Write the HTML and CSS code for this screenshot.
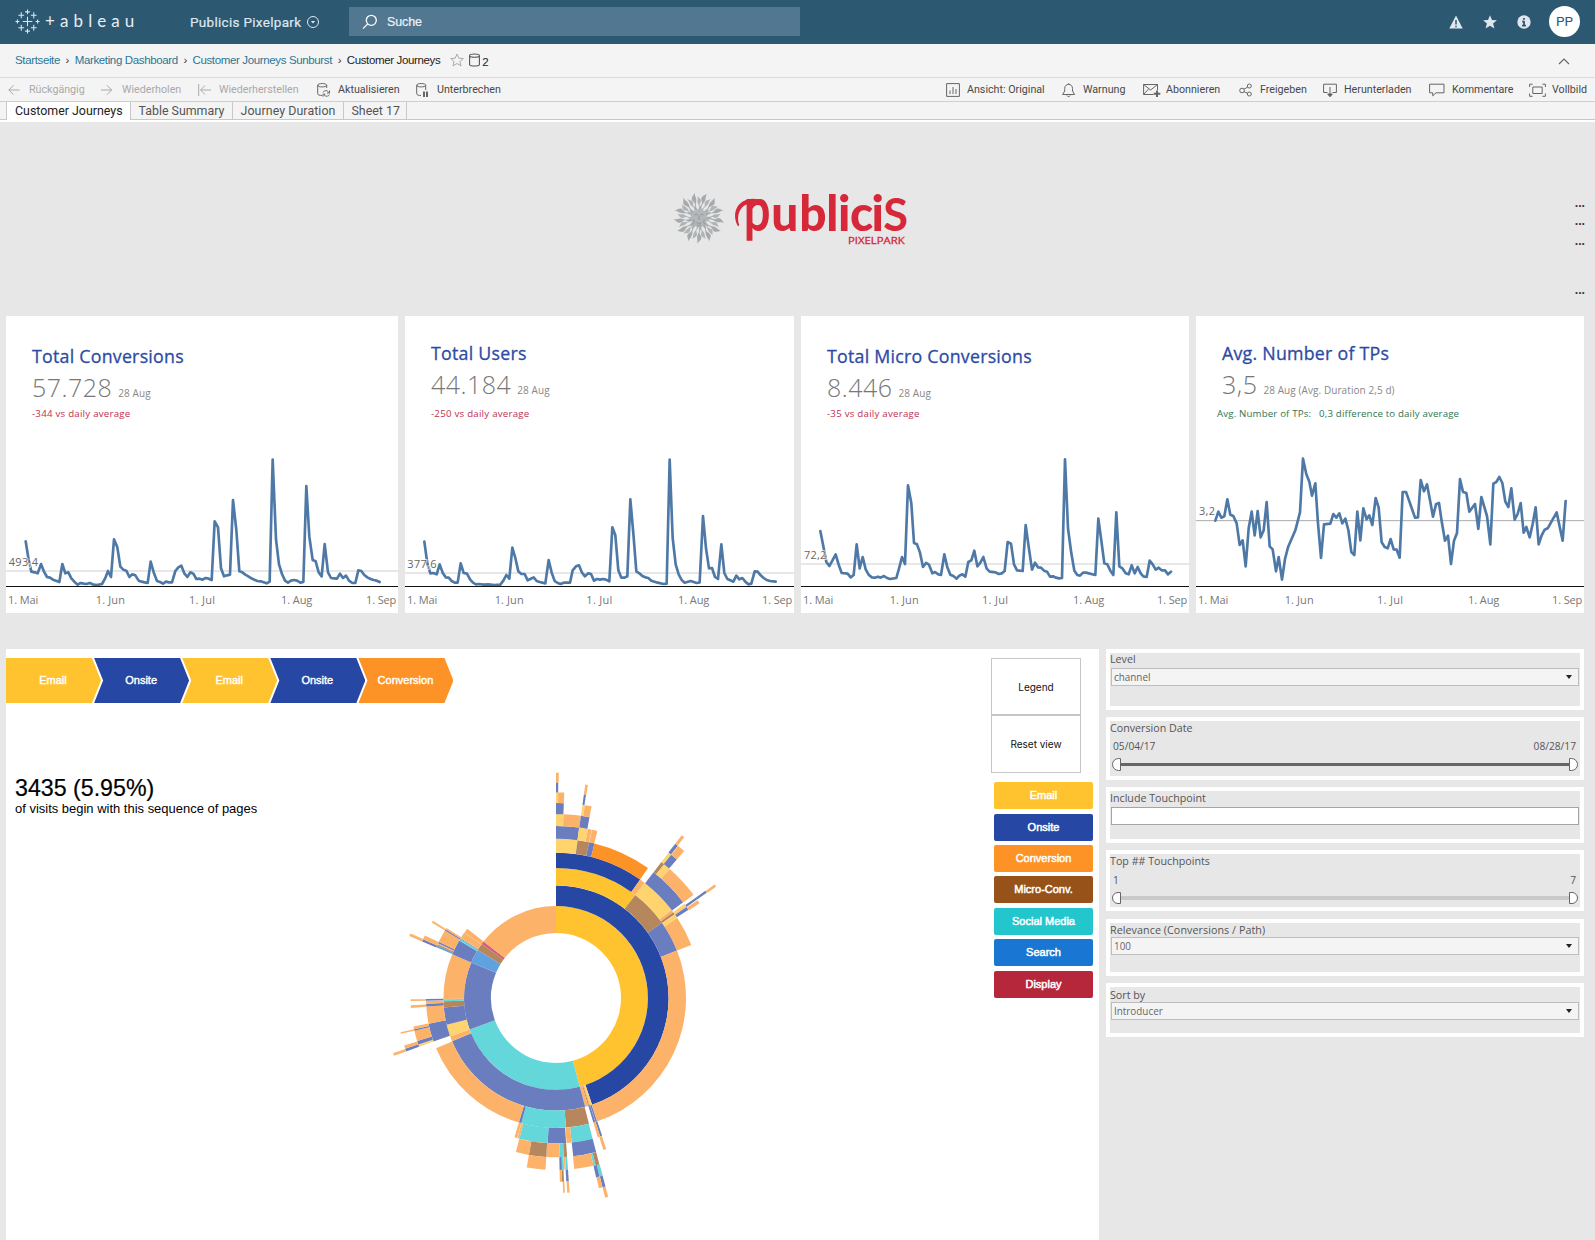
FILE: index.html
```html
<!DOCTYPE html>
<html lang="de">
<head>
<meta charset="utf-8">
<title>Customer Journeys</title>
<link rel="stylesheet" href="styles.css">
</head>
<body>
<header class="topbar">
  <svg class="mark" viewBox="0 0 26 26"><path d="M13 8v10M8 13h10M13 .5v5M10.500 3h5M13 20.500v5M10.500 23h5M.5 13h4M2.500 11v4M21.500 13h4M23.500 11v4M6.500 3.500v6M3.500 6.500h6M19.500 3.500v6M16.500 6.500h6M6.500 16.500v6M3.500 19.500h6M19.500 16.500v6M16.500 19.500h6"/></svg>
  <span class="wordmark">+ableau</span>
  <span class="site">Publicis Pixelpark</span>
  <svg class="drop" viewBox="0 0 14 14"><circle cx="7" cy="7" r="5.500"/><path d="M4.800 6h4.400L7 8.500z"/></svg>
  <div class="search"><svg viewBox="0 0 16 16"><circle cx="9.300" cy="6.300" r="5"/><path d="M5.700 9.900L1 14.600"/></svg><span>Suche</span></div>
  <div class="account">
    <svg viewBox="0 0 14 14"><path fill="#dfe6ee" d="M7 .5L13.700 13.500H.3z"/><path stroke="#2c5872" stroke-width="1.500" d="M7 5v4.500M7 10.700v1.500"/></svg>
    <svg viewBox="0 0 14 14"><path fill="#dfe6ee" d="M7 .3l2 4.700 4.900.3-3.800 3.200 1.300 5L7 10.800l-4.400 2.700 1.300-5L.1 5.300 5 5z"/></svg>
    <svg viewBox="0 0 14 14"><circle cx="7" cy="7" r="6.700" fill="#dfe6ee"/><path stroke="#2c5872" stroke-width="1.800" d="M7 3v1.800M7 6v4.500M5.300 6.500H7M5 10.600h4"/></svg>
    <span class="avatar">PP</span>
  </div>
</header>

<nav class="crumbs">
  <a>Startseite</a><i>›</i><a>Marketing Dashboard</a><i>›</i><a>Customer Journeys Sunburst</a><i>›</i><span>Customer Journeys</span>
  <svg class="fav" viewBox="0 0 14 14"><path d="M7 1l1.800 4.200 4.600.3-3.500 3 1.100 4.400L7 10.500l-4 2.400 1.100-4.400-3.500-3 4.600-.3z"/></svg>
  <svg class="db" viewBox="0 0 11 14"><path d="M.6 2.500C.6.500 10.400.5 10.400 2.500v9c0 2-9.800 2-9.800 0zM.6 2.500c0 2.300 9.800 2.300 9.800 0"/></svg>
  <span class="count">2</span>
  <svg class="collapse" viewBox="0 0 12 8"><path d="M1 7l5-5 5 5"/></svg>
</nav>

<div class="toolbar">
  <div class="tool off"><svg viewBox="0 0 18 14"><path d="M11.500 7H.8M5.500 2.300L.8 7l4.700 4.700"/></svg>Rückgängig</div>
  <div class="tool off"><svg viewBox="0 0 18 14"><path d="M0 7h10.700M6 2.300L10.700 7 6 11.700"/></svg>Wiederholen</div>
  <div class="tool off"><svg viewBox="0 0 18 14"><path d="M.7 1v12M13 7H3M7 2.500L2.500 7 7 11.500"/></svg>Wiederherstellen</div>
  <div class="tool"><svg viewBox="0 0 18 14"><path d="M5 12.500c-2 0-4.300-.5-4.300-1.700V2.200C.7 0 9.700 0 9.700 2.200V5M.7 2.200c0 2.300 9 2.300 9 0M6 9.500c1-2.500 5-2.500 5.500 0M12.500 7.500v2.500H10M12.500 11.500c-1 2.300-5 2.300-5.500 0M6 13.700v-2.500h2.300"/></svg>Aktualisieren</div>
  <div class="tool"><svg viewBox="0 0 18 14"><path d="M5 12.500c-2 0-4.300-.5-4.300-1.700V2.200C.7 0 9.700 0 9.700 2.200V7M.7 2.200c0 2.300 9 2.300 9 0"/><path stroke-width="2" d="M8 8.500V14M11 8.500V14"/></svg>Unterbrechen</div>
  <div class="tool"><svg viewBox="0 0 18 14"><path d="M.6.6h12.800v12.800H.6zM4 11V7.500M7 11V4M10 11V6"/></svg>Ansicht: Original</div>
  <div class="tool"><svg viewBox="0 0 18 14"><path d="M.6 11.500h12L10.500 8V5.500C10.500 0 2.700 0 2.700 5.500V8zM5 12.500c.5 1.500 2.700 1.500 3.200 0M6.600.2v1"/></svg>Warnung</div>
  <div class="tool wide"><svg viewBox="0 0 18 14"><path d="M10.500 11.500H.6V1.500h13.900V7M.6 1.500l7 5.500 6.900-5.500M.6 11.500L5.500 6"/><path stroke-width="2" d="M14 7.500v6.500M10.700 10.800h6.600"/></svg>Abonnieren</div>
  <div class="tool"><svg viewBox="0 0 18 14"><circle cx="3" cy="7.500" r="2.300"/><circle cx="10.300" cy="3" r="2"/><circle cx="10.300" cy="11" r="2"/><path d="M5 6.200l3.500-2M5 8.700l3.500 1.500"/></svg>Freigeben</div>
  <div class="tool"><svg viewBox="0 0 18 14"><path d="M4.500 9.500H.6V1.200h12.800v8.300H9.500M7 4v8"/><path fill="#555" d="M4.700 11h4.600L7 13.800z"/></svg>Herunterladen</div>
  <div class="tool wide"><svg viewBox="0 0 18 14"><path d="M.6 1.200h14.400v8.600H7l-3.300 3V9.800H.6z"/></svg>Kommentare</div>
  <div class="tool wide"><svg viewBox="0 0 18 14"><path d="M3.800 4h9.400v6.500H3.800zM.6 4V1.200h3M13.400 1.200h3V4M16.400 10.500v2.800h-3M3.600 13.300h-3v-2.800"/></svg>Vollbild</div>
</div>

<div class="tabs"><span class="tab on">Customer Journeys</span><span class="tab t2">Table Summary</span><span class="tab t3">Journey Duration</span><span class="tab t4">Sheet 17</span></div>

<div class="brand">
  <svg class="logo" viewBox="0 0 780 225">
    <g id="lion" transform="translate(117 114)"></g>
    <g fill="#d62839" font-family="Lato, sans-serif">
      <text transform="translate(251 153) scale(.76 1)" font-size="186" font-weight="700">p</text>
      <text transform="translate(334 153) scale(.97 1)" x="0 86 170 206 243 310 346" y="0" font-size="148" font-weight="900">ublici<tspan font-size="140" font-weight="700">S</tspan></text>
      <path d="M234 139C212 98 234 56 279 56C290 56 300 58 308 62L300 72C293 69 285 69 277 69C242 71 227 104 238 136z"/>
      <text x="564" y="193" font-size="25" font-weight="400" stroke="#d62839" stroke-width=".8" font-family="Open Sans, sans-serif" textLength="170" lengthAdjust="spacingAndGlyphs">PIXELPARK</text>
    </g>
  </svg>
  <div class="more"><span>...</span><span>...</span><span>...</span><span>...</span></div>
</div>

<section class="kpis">
  <article class="kpi">
    <h2>Total Conversions</h2>
    <p class="num">57.728 <small>28 Aug</small></p>
    <p class="delta">-344 vs daily average</p>
    <svg viewBox="18 429 1176 480">
      <path class="avg" d="M18 783H1194"/>
      <polyline points="77,694 86,750 94,785 104,787 113,790 123,762 132,785 141,801 150,803 159,809 168,812 178,816 187,762 196,790 205,787 214,805 223,815 233,824 242,819 251,821 260,822 269,819 278,823 288,825 297,824 306,822 315,806 324,783 333,801 342,688 352,712 361,770 370,779 379,782 388,801 397,793 406,796 416,812 425,815 434,817 443,819 452,755 462,790 471,813 480,816 489,821 498,815 507,817 516,817 526,783 535,772 544,767 553,790 562,801 571,787 580,791 589,807 599,806 608,809 617,804 626,806 635,810 644,634 654,652 663,775 672,799 681,796 690,794 699,570 709,660 718,784 727,787 736,794 745,799 754,805 763,809 772,813 782,814 791,817 800,820 809,815 818,449 828,688 837,763 846,792 855,812 864,818 873,812 882,810 891,812 901,818 910,816 919,528 928,680 938,750 947,754 956,787 965,799 974,702 984,787 993,804 1002,805 1011,806 1020,791 1029,804 1038,797 1047,812 1057,819 1066,819 1075,781 1084,783 1093,795 1102,802 1112,807 1121,810 1130,812 1139,816"/>
      <path class="axis" d="M18 829.500H1194"/>
      <text class="halo" x="26" y="768" textLength="88">493,4</text>
      <text x="24" y="882" textLength="91">1. Mai</text><text x="287" y="882" textLength="88">1. Jun</text><text x="567" y="882" textLength="78">1. Jul</text><text x="843" y="882" textLength="94">1. Aug</text><text x="1098" y="882" textLength="91">1. Sep</text>
    </svg>
  </article>
  <article class="kpi high">
    <h2>Total Users</h2>
    <p class="num">44.184 <small>28 Aug</small></p>
    <p class="delta">-250 vs daily average</p>
    <svg viewBox="15 429 1167 480">
      <path class="avg" d="M15 789H1182"/>
      <polyline points="73,695 82,760 91,790 100,789 110,793 119,763 128,788 137,802 146,803 155,813 164,818 173,818 182,760 191,789 201,791 210,808 219,818 228,823 237,822 250,824 265,823 283,825 301,824 310,812 319,795 328,806 337,713 346,744 355,784 364,792 374,792 383,811 391,807 401,802 410,813 419,816 436,820 446,750 455,788 464,813 473,819 482,822 491,818 510,818 518,781 528,769 537,766 546,788 555,799 564,790 573,792 582,812 591,807 600,809 609,807 618,809 628,814 637,652 646,676 655,781 664,803 673,803 682,799 691,568 700,670 709,784 718,790 727,798 736,802 745,804 754,812 773,818 791,822 800,821 809,449 818,684 827,763 836,793 845,810 854,818 872,813 890,819 899,817 909,618 918,715 927,775 936,774 945,801 954,807 964,703 973,789 982,807 991,811 1000,815 1009,797 1018,808 1027,804 1036,815 1045,823 1054,821 1064,784 1073,785 1082,796 1091,804 1100,810 1110,813 1127,815"/>
      <path class="axis" d="M15 829.500H1182"/>
      <text class="halo" x="22" y="774" textLength="88">377,6</text>
      <text x="21" y="882" textLength="91">1. Mai</text><text x="284" y="882" textLength="87">1. Jun</text><text x="559" y="882" textLength="78">1. Jul</text><text x="834" y="882" textLength="94">1. Aug</text><text x="1086" y="882" textLength="91">1. Sep</text>
    </svg>
  </article>
  <article class="kpi">
    <h2>Total Micro Conversions</h2>
    <p class="num">8.446 <small>28 Aug</small></p>
    <p class="delta">-35 vs daily average</p>
    <svg viewBox="18 429 1164 480">
      <path class="avg" d="M18 762H1182"/>
      <polyline points="76,663 85,709 94,756 103,768 112,752 122,733 131,764 140,789 158,791 167,802 176,795 185,703 194,775 203,741 212,778 221,794 230,802 240,803 249,800 257,803 267,798 276,804 285,807 304,804 313,772 321,741 330,762 339,526 349,580 357,699 366,703 375,728 384,771 393,759 402,764 412,790 420,786 430,793 438,795 448,733 457,772 466,794 475,798 485,806 493,797 502,793 511,800 520,756 529,751 538,722 547,769 556,758 565,741 575,776 584,785 602,787 611,792 620,790 629,783 638,696 648,701 657,763 666,781 683,783 692,645 701,710 711,779 720,758 729,772 738,773 747,782 756,785 765,800 774,799 783,803 792,805 801,804 810,448 819,655 829,730 838,782 847,795 855,797 864,788 873,788 901,795 910,626 919,692 928,760 937,763 946,782 955,795 964,607 973,769 982,775 992,790 1001,793 1010,766 1019,790 1028,771 1037,790 1045,799 1055,801 1064,752 1073,763 1082,779 1091,773 1100,781 1110,781 1119,793 1128,785"/>
      <path class="axis" d="M18 829.500H1182"/>
      <text class="halo" x="27" y="747" textLength="67">72,2</text>
      <text x="24" y="882" textLength="91">1. Mai</text><text x="284" y="882" textLength="87">1. Jun</text><text x="561" y="882" textLength="78">1. Jul</text><text x="834" y="882" textLength="94">1. Aug</text><text x="1086" y="882" textLength="91">1. Sep</text>
    </svg>
  </article>
  <article class="kpi high last">
    <h2>Avg. Number of TPs</h2>
    <p class="num">3,5 <small>28 Aug (Avg. Duration 2,5 d)</small></p>
    <p class="delta up">Avg. Number of TPs: &nbsp; 0,3 difference to daily average</p>
    <svg viewBox="18 429 1164 480">
      <path class="avg dark" d="M18 632H1182"/>
      <polyline points="76,632 85,605 94,623 103,619 112,568 121,614 130,618 140,640 149,705 158,691 167,769 176,655 185,605 194,676 203,603 212,682 221,661 230,576 239,709 248,718 258,784 266,741 276,809 285,747 294,712 316,661 330,607 339,446 349,493 358,515 366,557 376,520 384,640 393,744 402,643 421,641 430,612 439,623 448,610 457,640 466,626 475,660 484,726 493,735 502,605 511,691 520,595 530,628 538,616 547,645 557,564 566,593 575,697 584,711 593,715 602,687 611,718 620,719 629,743 638,546 648,546 657,571 675,623 684,622 692,510 702,544 711,523 720,571 729,620 738,583 747,579 756,640 765,692 774,677 783,762 792,692 801,669 810,507 819,546 829,549 838,605 855,582 865,657 874,561 891,618 901,703 910,521 919,516 928,501 937,519 946,575 955,591 964,535 974,629 983,612 992,579 1001,668 1009,651 1019,682 1028,642 1037,592 1046,703 1055,676 1064,659 1073,655 1100,607 1109,650 1118,692 1127,573"/>
      <path class="axis" d="M18 829.500H1182"/>
      <text class="halo" x="27" y="616" textLength="48">3,2</text>
      <text x="24" y="882" textLength="91">1. Mai</text><text x="284" y="882" textLength="87">1. Jun</text><text x="561" y="882" textLength="78">1. Jul</text><text x="834" y="882" textLength="94">1. Aug</text><text x="1086" y="882" textLength="91">1. Sep</text>
    </svg>
  </article>
</section>

<main class="lower">
  <section class="journey">
    <svg class="sunburst" id="sunburst" viewBox="-550 -349 1093 591"></svg>
    <div class="info">
      <div class="trail"><span class="first email">Email</span><span class="onsite">Onsite</span><span class="email">Email</span><span class="onsite">Onsite</span><span class="conversion">Conversion</span></div>
      <div class="share">3435 (5.95%)</div>
      <div class="caption">of visits begin with this sequence of pages</div>
    </div>
    <div class="side">
      <button>Legend</button><button>Reset view</button>
      <div class="legend"><span class="email">Email</span><span class="onsite">Onsite</span><span class="conversion">Conversion</span><span class="micro">Micro-Conv.</span><span class="social">Social Media</span><span class="lookup">Search</span><span class="display">Display</span></div>
    </div>
  </section>
  <aside class="filters">
    <div class="filter f1"><label>Level</label><div class="select">channel</div></div>
    <div class="filter f2"><label>Conversion Date</label><div class="ends"><span>05/04/17</span><span>08/28/17</span></div><div class="slider"><i></i><b></b><i class="r"></i></div></div>
    <div class="filter f3"><label>Include Touchpoint</label><div class="input"></div></div>
    <div class="filter f4"><label>Top ## Touchpoints</label><div class="ends"><span>1</span><span>7</span></div><div class="slider light"><i></i><b></b><i class="r"></i></div></div>
    <div class="filter f5"><label>Relevance (Conversions / Path)</label><div class="select">100</div></div>
    <div class="filter f6"><label>Sort by</label><div class="select">Introducer</div></div>
  </aside>
</main>
<script src="charts.js"></script>
</body>
</html>
```
FILE: styles.css
```css
* { box-sizing: border-box; }
body { margin: 0; width: 1595px; height: 1240px; overflow: hidden; background: #e7e7e7; font-family: Roboto, sans-serif; }
svg { display: block; flex: none; }

.topbar { display: flex; align-items: center; height: 44px; padding: 0 15px; background: #2c5872; color: #dfe6ee; }
.mark { width: 25px; height: 25px; margin-top: -2px; stroke: #dfe6ee; stroke-width: 1.1; fill: none; }
.wordmark { width: 145px; margin: -3px 0 0 5px; font: 400 17px Lato, sans-serif; letter-spacing: 5.1px; color: #e8eef3; }
.site { width: 117px; font-size: 13.5px; letter-spacing: .3px; white-space: nowrap; -webkit-text-stroke: .2px #dfe6ee; }
.drop { width: 14px; height: 14px; margin-left: -1px; fill: none; stroke: #dfe6ee; }
.drop path { fill: #dfe6ee; stroke: none; }
.search { display: flex; align-items: center; width: 451px; height: 29px; margin: -1px 0 0 29px; padding-left: 13px; gap: 9px; background: #527791; font: 12.500px "Liberation Sans", sans-serif; color: #eef2f6; }
.search svg { width: 16px; height: 16px; fill: none; stroke: #fff; stroke-width: 1.3; }
.search span { letter-spacing: -.1px; -webkit-text-stroke: .2px #eef2f6; }
.account { display: flex; align-items: center; margin-left: auto; gap: 20px; height: 44px; padding-bottom: 1px; }
.account svg { width: 14px; height: 14px; }
.avatar { width: 31px; height: 31px; margin-left: -2px; border-radius: 50%; background: #fff; color: #2c5872; font-size: 13.500px; line-height: 31px; text-align: center; }

.crumbs { display: flex; align-items: center; height: 34px; padding: 0 25px 2px 15px; background: #f4f4f4; border-bottom: 1px solid #dcdcdc; font: 11.500px "Liberation Sans", sans-serif; letter-spacing: -.36px; color: #222; white-space: nowrap; }
.crumbs a { color: #2a7695; }
.crumbs i { width: 14.700px; font-style: normal; text-align: center; color: #333; }
.fav { width: 14px; height: 14px; margin-left: 10px; fill: none; stroke: #aaa; }
.db { width: 11px; height: 14px; margin-left: 5px; fill: none; stroke: #555; stroke-width: 1.100; }
.count { margin: 4px 0 0 2px; }
.collapse { width: 12px; height: 8px; margin: 3px 0 0 auto; fill: none; stroke: #666; stroke-width: 1.200; }

.toolbar { display: grid; grid-template-columns: 93px 97px 119px 99px 530px 116px 81px 96px 84px 106px 100px 60px; align-items: center; height: 24px; padding: 0 0 0 8px; background: #f4f4f4; border-bottom: 1px solid #cfcfcf; font-size: 10.700px; color: #484848; }
.tool { display: flex; gap: 3px; align-items: center; white-space: nowrap; }
.tool.wide { gap: 5px; }
.tool svg { width: 18px; height: 14px; fill: none; stroke: #666; overflow: visible; }
.off { color: #a9a9a9; }
.off svg { stroke: #a9a9a9; }

.tabs { display: flex; height: 20px; padding-left: 6px; background: linear-gradient(#f4f4f4 17px, #c8c8c8 17px, #c8c8c8 18px, #fff 18px); font-size: 12.400px; color: #555; }
.tab { height: 18px; padding-left: 7.500px; border-right: 1px solid #c8c8c8; line-height: 18px; white-space: nowrap; }
.tab.on { width: 125px; padding-left: 8px; border-left: 1px solid #c8c8c8; background: #fff; color: #222; }
.t2 { width: 102px; }
.t3 { width: 111px; letter-spacing: .07px; }
.t4 { width: 63px; }

.brand { display: flex; justify-content: space-between; height: 194px; }
.logo { width: 260px; height: 75px; margin: 58px 0 0 660px; overflow: visible; }
.more { display: grid; grid-template-rows: 18px 20px 49px 20px; margin: 72px 10px 0 0; font: 700 12px/18px "Open Sans", sans-serif; color: #333; }

.kpis { display: grid; grid-template-columns: 392px 389px 388px 388px; gap: 7px; height: 297px; padding-left: 6px; }
.kpi { display: flex; flex-direction: column; background: #fff; font-family: "Open Sans", "Noto Sans", sans-serif; white-space: nowrap; }
.kpi h2 { margin: 27px 0 0 26px; font-size: 17.800px; font-weight: 500; line-height: 26px; letter-spacing: .24px; color: #2c4ba5; -webkit-text-stroke: .3px #2c4ba5; }
.num { margin: 2px 0 0 26px; font-size: 25px; font-weight: 300; line-height: 32px; letter-spacing: .5px; color: #777; }
.num small { margin-left: -1px; font-size: 10px; font-weight: 400; letter-spacing: .08px; color: #888; }
.delta { margin: -4px 0 0 26px; font-size: 9.700px; line-height: 18px; letter-spacing: .24px; color: #bf2f52; }
.up { margin-left: 21px; letter-spacing: .15px; color: #2f7550; }
.high h2 { margin-top: 24px; }
.high .delta { margin-top: -1px; }
.kpi svg { width: 100%; height: 160px; margin-top: auto; }
.kpi polyline { fill: none; stroke: #4e79a7; stroke-width: 8; stroke-linejoin: round; stroke-linecap: round; }
.avg { stroke: #cfcfcf; stroke-width: 3; }
.avg.dark { stroke: #aaa; }
.axis { stroke: #111; stroke-width: 3; }
.kpi text { font-size: 33px; fill: #777; }
.kpi .halo { paint-order: stroke; stroke: #fff; stroke-opacity: .7; stroke-width: 6px; fill: #666; }

.lower { display: flex; gap: 7px; height: 627px; padding: 36px 0 0 6px; }
.journey { display: grid; width: 1093px; height: 591px; background: #fff; font-family: "Liberation Sans", sans-serif; }
.journey > * { grid-area: 1 / 1; }
.sunburst { width: 1093px; height: 591px; }
.info { padding-top: 9px; }
.trail { display: flex; height: 45px; color: #fff; font-size: 11px; }
.trail span { width: 95px; margin-right: -6.900px; padding-right: 1px; line-height: 45px; text-align: center; clip-path: polygon(0 0, 86px 0, 100% 50%, 86px 100%, 0 100%, 9px 50%); -webkit-text-stroke: .4px #fff; }
.trail .first { clip-path: polygon(0 0, 86px 0, 100% 50%, 86px 100%, 0 100%); }
.share { margin: 71px 0 0 9px; font-size: 23.200px; line-height: 28px; -webkit-text-stroke: .2px; }
.caption { margin-left: 9px; font-size: 12.970px; line-height: 14px; }
.side { justify-self: end; width: 108px; padding-top: 9px; }
.side button { display: block; width: 90px; height: 57px; padding: 0; border: 1px solid #c6c6c6; background: #fff; font: 10px Inter, sans-serif; color: #111; }
.side button + button { height: 58px; }
.legend { display: flex; flex-direction: column; gap: 4.400px; margin: 9.300px 0 0 3px; color: #fff; font-size: 11px; text-align: center; }
.legend span { width: 99px; height: 27px; line-height: 27px; border-radius: 2px; -webkit-text-stroke: .5px #fff; }
.email { background: #ffc330; }
.onsite { background: #2647a3; }
.conversion { background: #fd9226; }
.micro { background: #965219; }
.social { background: #22c6cc; }
.lookup { background: #1976d2; }
.display { background: #b7273c; }

.filters { display: flex; flex-direction: column; gap: 7px; width: 478px; font: 10.700px "Open Sans", "Noto Sans", sans-serif; color: #555; }
.filter { display: flex; flex-direction: column; flex: none; padding: 0 1px; border: 4px solid #fff; }
.filter label { margin-left: -1px; height: 15px; line-height: 13px; }
.f1 { height: 61px; } .f2 { height: 63px; } .f3 { height: 56px; } .f4 { height: 61px; } .f5 { height: 57px; margin-top: 1px; } .f6 { height: 54px; }
.f2 label, .f3 label, .f4 label { height: 16px; line-height: 15px; }
.f5 label { height: 14px; line-height: 14px; letter-spacing: .08px; }
.f6 label { line-height: 16px; }
.select { display: flex; align-items: center; justify-content: space-between; height: 18px; padding: 0 6px 0 2px; border: 1px solid #bebebe; background: #f4f4f4; font-size: 9.900px; color: #666; }
.select::after { content: ""; border: 3px solid transparent; border-top: 4px solid #222; border-bottom: 0; }
.input { height: 18px; border: 1px solid #a5a5a5; background: #fff; }
.ends { display: flex; justify-content: space-between; height: 18px; padding: 0 3px 0 2px; font-size: 10.200px; line-height: 19px; }
.slider { display: flex; align-items: center; height: 13px; margin: 3px 1px 0; }
.slider i { width: 9px; height: 13px; border: 1px solid #666; border-radius: 7px 0 0 7px; background: #fff; }
.slider i.r { border-radius: 0 7px 7px 0; }
.slider b { flex: 1; height: 3px; background: #666; }
.f4 .ends { line-height: 21px; }
.slider.light { margin-top: 4px; height: 12px; }
.light b { height: 4px; background: #cacaca; }
.light i { height: 12px; }
```
FILE: charts.js
```js
// Channel colours: plain for the highlighted path, faded for everything else.
const colors = {
  Y: '#ffc330', N: '#2647a3', O: '#fd9226',
  y: '#ffd46e', n: '#6a7dbf', o: '#fcb268', t: '#63d7d9', b: '#b6865c', s: '#60a1e0', d: '#d0637a'
};

// One entry per ring, innermost first: [colour, start angle, end angle], clockwise from the top.
const rings = [
  [['Y',0,165],['t',165,250],['n',250,292.8],['s',292.8,301.5],['b',301.5,306],['d',306,308],['o',308,360]],
  [['N',0,161.3],['y',161.3,162.3],['o',162.3,162.9],['b',162.9,163.4],['o',163.4,165],['n',165,247.4],['o',247.4,250],['y',250,256.3],['n',256.3,265.2],['b',265.2,268.3],['t',268.3,269.4],['o',269.5,292.8],['n',292.8,300.7],['t',300.7,301.7],['n',301.7,302.1],['o',302.2,305.5],['o',305.6,308]],
  [['Y',0,37.6],['b',37.6,54.6],['n',54.6,68.6],['o',68.6,161.5],['n',161.6,162.3],['n',162.4,163.3],['b',165.3,175.6],['t',175.6,195.5],['n',195.5,196.6],['o',196.6,247.3],['n',250.4,258.6],['o',258.6,266.2],['n',266.2,267.5],['o',267.5,268.7],['n',268.8,269.6],['s',293,293.9],['b',293.9,294.4],['o',294.4,294.9],['n',294.9,295.6],['o',295.6,301.3],['n',301.3,301.9],['o',301.9,302.6]],
  [['N',0,35.4],['o',35.4,37.6],['y',37.6,52.7],['o',52.7,53.8],['b',53.8,54.8],['y',54.8,56.6],['o',56.6,68.6],['n',161.5,162.3],['o',162.3,163.3],['t',165.4,173.8],['o',173.8,175.8],['n',176,183.3],['t',183.3,194.6],['o',194.6,195.4],['o',195.5,196.6],['y',250.4,251.3],['n',251.3,252.8],['o',252.8,257],['n',257,257.6],['o',257.6,258.7],['o',266.1,267.1],['o',268.8,269.5],['n',292.9,293.8],['o',293.8,295.5],['o',301.3,302.1]],
  [['y',0,7.8],['b',7.8,12],['n',12,14],['O',14,35.3],['n',37.8,53],['y',53.7,54.7],['o',54.7,55],['n',55.1,56.3],['o',161.6,162.7],['n',165.4,173.8],['b',176,177.2],['t',177.2,178.6],['o',178.6,183.5],['b',183.5,189.8],['o',189.8,194.6],['n',250.4,251.4],['o',251.4,252.6],['o',257,257.6],['o',292.9,293.9]],
  [['n',0,7.75],['y',7.75,10.7],['o',10.7,12],['o',12.1,13.9],['b',37.8,39],['y',39,41.4],['o',41.4,53.1],['n',54.3,55.1],['o',55.4,56.6],['b',165.4,166.7],['t',166.7,167.4],['o',167.4,173.9],['t',176,176.7],['o',176.7,177.2],['t',177.3,178],['n',178,178.8],['o',183.5,189.8],['o',250.4,251.3]],
  [['y',0,2.35],['o',2.35,7.8],['n',7.8,10.5],['y',37.8,38.8],['n',38.8,41.1],['n',54.3,55.1],['t',165.3,166.3],['n',166.3,167.4],['n',176,176.8],['b',177.5,178.1],['o',178.1,178.8]],
  [['n',0,2.3],['y',7.8,8.5],['o',8.5,10.5],['n',37.7,38.7],['o',38.8,41.1],['o',54.4,55.2],['n',165.3,166.2],['o',166.2,167.3],['o',176,176.7],['o',177.4,177.9]],
  [['y',0,.6],['o',.6,2.3],['n',7.8,8.4],['o',37.7,38.6],['o',165.3,166.2]],
  [['n',0,.6],['o',7.8,8.5]],
  [['o',0,.7]]
];

const NS = 'http://www.w3.org/2000/svg';
function add(parent, name, attrs) {
  const el = document.createElementNS(NS, name);
  for (const key in attrs) el.setAttribute(key, attrs[key]);
  parent.appendChild(el);
}
function point(r, deg) {
  const a = deg * Math.PI / 180;
  return (r * Math.sin(a)).toFixed(2) + ' ' + (-r * Math.cos(a)).toFixed(2);
}

const burst = document.getElementById('sunburst');
rings.forEach((ring, i) => {
  const r0 = 65 * Math.sqrt(i + 1), r1 = 65 * Math.sqrt(i + 2);
  ring.forEach(([c, a, b]) => add(burst, 'path', {
    fill: colors[c],
    d: `M${point(r0, a)}L${point(r1, a)}A${r1} ${r1} 0 ${b - a > 180 ? 1 : 0} 1 ${point(r1, b)}L${point(r0, b)}A${r0} ${r0} 0 ${b - a > 180 ? 1 : 0} 0 ${point(r0, a)}z`
  }));
});

// Lion emblem: wavy rays around an engraved face.
const lion = document.getElementById('lion');
for (let i = 0; i < 26; i++) {
  const s = i % 2 ? 1.02 : .88;
  add(lion, 'path', {
    d: 'M-4 -20C-13 -33 4 -38 -4 -50S-3 -66 6 -75C2 -65 8 -60 4 -50S-4 -35 4 -20z',
    transform: `rotate(${i * 360 / 26}) scale(${i % 3 ? s : -s} ${s})`,
    fill: i % 2 ? '#a6aaac' : '#b0b4b6'
  });
}
add(lion, 'ellipse', { rx: 24, ry: 28, fill: '#b4b7b9' });
add(lion, 'path', { d: 'M-14 -9q6 -5 10 0M4 -9q6 -5 10 0M0 -8v14M-8 14q8 5 16 0M-6 21q6 3 12 0M-16 4q4 9 -1 15M16 4q-4 9 1 15', fill: 'none', stroke: '#8d9194', 'stroke-width': 2.5 });
```
